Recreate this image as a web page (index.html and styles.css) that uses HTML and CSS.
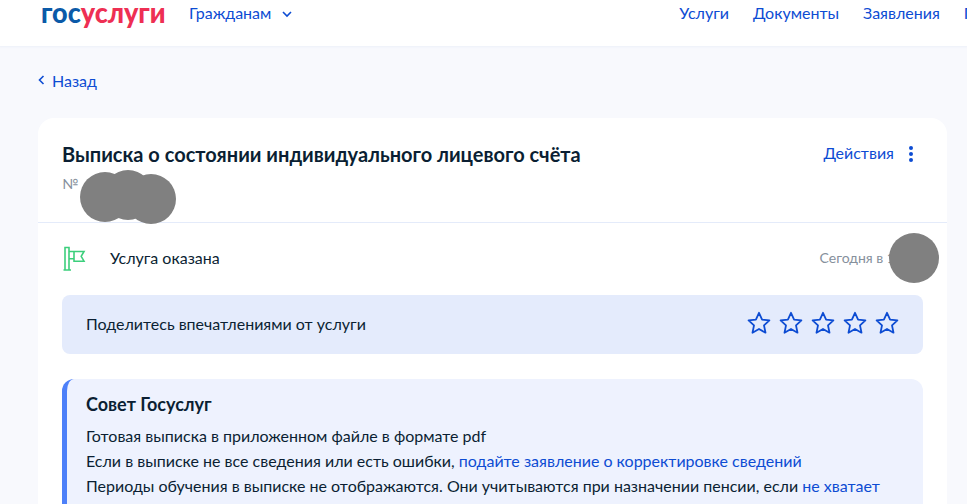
FILE: index.html
```html
<!DOCTYPE html>
<html lang="ru">
<head>
<meta charset="utf-8">
<title>Выписка о состоянии индивидуального лицевого счёта</title>
<link rel="stylesheet" href="styles.css">
</head>
<body>
<header class="header">
  <div class="logo"><span class="logo-text"><span class="logo-a">гос</span><span class="logo-b">услуги</span></span></div>
  <a class="nav-main">Гражданам
    <svg class="chev" width="10" height="7" viewBox="0 0 10 7"><path d="M1 1l4 4 4-4" fill="none" stroke="#0d4cd3" stroke-width="1.6"/></svg>
  </a>
  <nav class="nav">
    <a>Услуги</a><a>Документы</a><a>Заявления</a><a>Платежи</a>
  </nav>
</header>
<main class="main">
  <a class="back">
    <svg width="7" height="10" viewBox="0 0 7 10"><path d="M5.500 1l-4 4 4 4" fill="none" stroke="#0d4cd3" stroke-width="1.6"/></svg>
    Назад
  </a>
  <section class="card">
    <div class="head">
      <div class="head-left">
        <h1 class="title">Выписка о состоянии индивидуального лицевого счёта</h1>
        <div class="num">№</div>
      </div>
      <div class="actions">
        <a>Действия</a>
        <svg width="6" height="18" viewBox="0 0 6 18"><circle cx="3" cy="3" r="2" fill="#0d4cd3"/><circle cx="3" cy="9" r="2" fill="#0d4cd3"/><circle cx="3" cy="15" r="2" fill="#0d4cd3"/></svg>
      </div>
    </div>
    <div class="status">
      <svg class="flag" width="24" height="26" viewBox="0 0 24 26" fill="none" stroke="#3ccf7c" stroke-width="1.600"><path d="M1.500 24h7.500M3 24V1.500h4v22.500M7 5.500H22l-2.800 4.800L22 15.200H12v-2.400H7M12 12.800V5.500"/></svg>
      <span class="status-text">Услуга оказана</span>
      <span class="status-date">Сегодня в 1</span>
    </div>
    <div class="rate">
      <span>Поделитесь впечатлениями от услуги</span>
      <div class="stars">
        <svg width="24" height="24" viewBox="0 0 24 24"><path class="star" d="M12 1.800l3.100 6.800 7.300.8-5.400 5 1.500 7.300-6.500-3.700-6.500 3.700 1.500-7.300-5.400-5 7.300-.8z"/></svg>
        <svg width="24" height="24" viewBox="0 0 24 24"><path class="star" d="M12 1.800l3.100 6.800 7.300.8-5.400 5 1.500 7.300-6.500-3.700-6.500 3.700 1.500-7.300-5.400-5 7.300-.8z"/></svg>
        <svg width="24" height="24" viewBox="0 0 24 24"><path class="star" d="M12 1.800l3.100 6.800 7.300.8-5.400 5 1.500 7.300-6.500-3.700-6.500 3.700 1.500-7.300-5.400-5 7.300-.8z"/></svg>
        <svg width="24" height="24" viewBox="0 0 24 24"><path class="star" d="M12 1.800l3.100 6.800 7.300.8-5.400 5 1.500 7.300-6.500-3.700-6.500 3.700 1.500-7.300-5.400-5 7.300-.8z"/></svg>
        <svg width="24" height="24" viewBox="0 0 24 24"><path class="star" d="M12 1.800l3.100 6.800 7.300.8-5.400 5 1.500 7.300-6.500-3.700-6.500 3.700 1.500-7.300-5.400-5 7.300-.8z"/></svg>
      </div>
    </div>
    <div class="tip">
      <h2 class="tip-title">Совет Госуслуг</h2>
      <p>Готовая выписка в приложенном файле в формате pdf</p>
      <p>Если в выписке не все сведения или есть ошибки, <a>подайте заявление о корректировке сведений</a></p>
      <p>Периоды обучения в выписке не отображаются. Они учитываются при назначении пенсии, если <a>не хватает</a></p>
    </div>
    <i class="blot blot-1"></i><i class="blot blot-2"></i><i class="blot blot-3"></i><i class="blot blot-4"></i>
  </section>
</main>
</body>
</html>
```
FILE: styles.css
```css
* { box-sizing: border-box; }
html, body { margin: 0; height: 504px; overflow: hidden; }
body { font-family: Lato, "Noto Sans", sans-serif; background: #f8f9fd; color: #0b1f33; font-size: 16px; }
a { color: #0d4cd3; text-decoration: none; }
.header { display: flex; align-items: center; height: 46px; padding: 0 0 22px 41px; background: #fff; box-shadow: 0 1px 2px rgba(200,210,235,.25); white-space: nowrap; }
.logo { flex: none; width: 148px; margin-top: 1px; font-size: 27px; font-weight: 900; line-height: 24px; }
.logo-text { display: inline-block; transform: scale(1, 1.04); transform-origin: left center; }
.logo-a { color: #0b5aa8; }
.logo-b { color: #ee2f53; }
.nav-main { flex: none; display: flex; align-items: center; gap: 11px; font-size: 16px; }
.chev { margin-top: 4px; }
.nav { display: flex; gap: 24px; margin-left: 387px; flex: none; }
.main { padding: 24px 20px 0 38px; }
.back { display: flex; align-items: center; gap: 7px; height: 20px; font-size: 16px; margin-bottom: 28px; }
.card { position: relative; background: #fff; border-radius: 16px; height: 400px; }
.head { display: flex; justify-content: space-between; height: 105px; padding: 23px 33px 0 24px; border-bottom: 1px solid #e4ebfa; }
.title { margin: 0; font-size: 20px; line-height: 26px; font-weight: 700; }
.num { margin-top: 7px; font-size: 14px; line-height: 20px; color: #86909c; }
.actions { display: flex; align-items: flex-start; gap: 14px; padding-top: 3px; }
.actions a { line-height: 18px; }
.actions svg { margin-top: 1px; }
.status { display: flex; align-items: center; height: 72px; padding: 0 24px; }
.flag { flex: none; margin-right: 24px; }
.status-text { flex: 1; font-size: 16px; margin-bottom: 4px; }
.status-date { font-size: 14px; color: #86909c; margin-right: 28px; margin-bottom: 4px; }
.rate { display: flex; align-items: center; justify-content: space-between; height: 59px; margin: 0 24px; padding: 0 24px 2px; background: #e4ebfc; border-radius: 8px; }
.stars { display: flex; gap: 8px; margin-bottom: 2px; }
.star { fill: none; stroke: #0d4cd3; stroke-width: 1.8; stroke-linejoin: round; }
.tip { margin: 25px 24px 0; padding: 13px 24px 0 19px; height: 200px; background: #eef2fe; border-left: 5px solid #4d80f9; border-radius: 12px; }
.tip-title { margin: 0 0 7px; font-size: 18px; line-height: 24px; font-weight: 700; }
.tip p { margin: 0; line-height: 25px; font-size: 16px; }
.blot { position: absolute; width: 50px; height: 50px; border-radius: 50%; background: #808080; }
.blot-1 { left: 42px; top: 54px; }
.blot-2 { left: 65px; top: 52px; }
.blot-3 { left: 88px; top: 56px; }
.blot-4 { left: 851px; top: 115px; }
```
